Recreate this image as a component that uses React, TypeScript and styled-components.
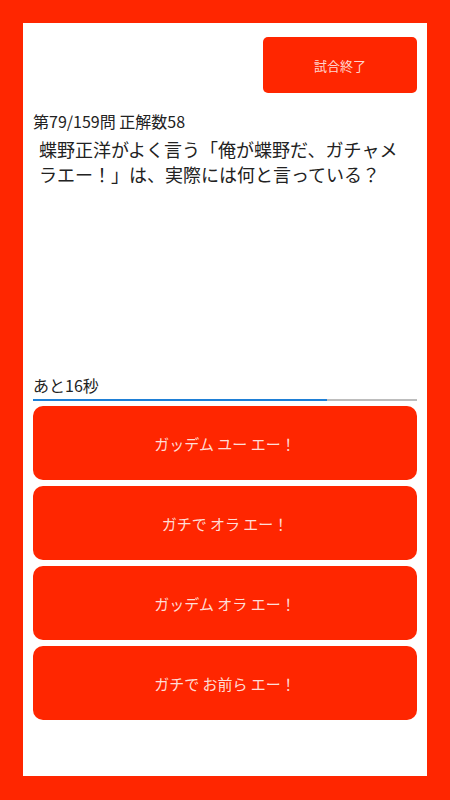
import React from 'react';
import styled, { createGlobalStyle } from 'styled-components';

const GlobalStyle = createGlobalStyle`
  html, body {
    margin: 0;
    padding: 0;
    background: #ff2600;
  }
  body {
    font-family: "Noto Sans CJK JP", "Noto Sans", sans-serif;
    color: #222222;
  }
`;

const Frame = styled.div`
  box-sizing: border-box;
  height: 800px;
  padding: 23px 23px 24px;
`;

const Panel = styled.div`
  box-sizing: border-box;
  height: 100%;
  background: #ffffff;
  display: flex;
  flex-direction: column;
  padding: 14px 10px 56px;
`;

const TopBar = styled.div`
  display: flex;
  justify-content: flex-end;
`;

const EndButton = styled.button`
  width: 154px;
  height: 56px;
  border: none;
  border-radius: 5px;
  background: #ff2600;
  color: rgba(255, 255, 255, 0.82);
  font-family: inherit;
  font-size: 13px;
`;

const Status = styled.div`
  margin-top: 16px;
  font-size: 16px;
  line-height: 24px;
`;

const Question = styled.div`
  flex: 1;
  margin-top: 4px;
  padding: 0 6px;
  font-size: 18px;
  line-height: 25px;
`;

const TimerLabel = styled.div`
  font-size: 16px;
  line-height: 20px;
`;

const Track = styled.div`
  margin-top: 4px;
  height: 2px;
  background: #bdbdbd;
`;

const Fill = styled.div`
  height: 100%;
  background: #1e7fd6;
`;

const Answers = styled.div`
  margin-top: 5px;
  display: flex;
  flex-direction: column;
  gap: 6px;
`;

const AnswerButton = styled.button`
  height: 74px;
  border: none;
  border-radius: 10px;
  background: #ff2600;
  color: rgba(255, 255, 255, 0.85);
  font-family: inherit;
  font-size: 15px;
`;

const answers = [
  'ガッデム ユー エー！',
  'ガチで オラ エー！',
  'ガッデム オラ エー！',
  'ガチで お前ら エー！',
];

export default function App() {
  const remaining = 16;
  const progress = 0.766;
  return (
    <>
      <GlobalStyle />
      <Frame>
        <Panel>
          <TopBar>
            <EndButton>試合終了</EndButton>
          </TopBar>
          <Status>第79/159問 正解数58</Status>
          <Question>蝶野正洋がよく言う「俺が蝶野だ、ガチャメラエー！」は、実際には何と言っている？</Question>
          <TimerLabel>あと{remaining}秒</TimerLabel>
          <Track>
            <Fill style={{ width: `${progress * 100}%` }} />
          </Track>
          <Answers>
            {answers.map(a => <AnswerButton key={a}>{a}</AnswerButton>)}
          </Answers>
        </Panel>
      </Frame>
    </>
  );
}
